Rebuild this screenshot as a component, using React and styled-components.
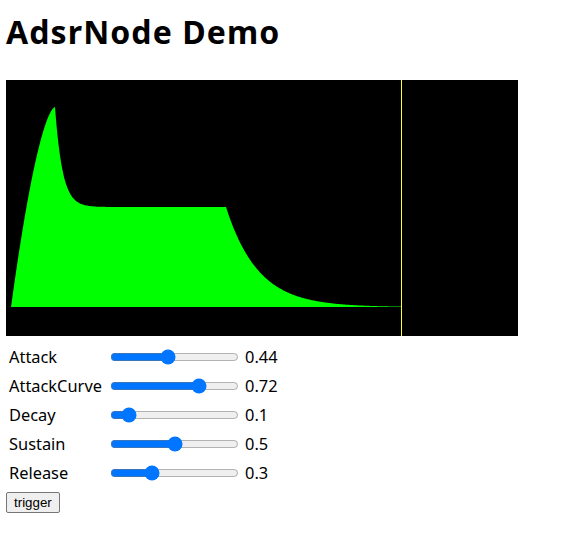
import styled, { createGlobalStyle } from "styled-components";
import { useMemo, useState } from "react";

const GlobalStyle = createGlobalStyle`
  body {
    margin: 0;
    background: #fff;
    color: #000;
    font-family: "Noto Sans", "Noto Sans CJK JP", sans-serif;
  }
`;

const params = [
  { key: "attack", label: "Attack", value: 0.44 },
  { key: "attackCurve", label: "AttackCurve", value: 0.72 },
  { key: "decay", label: "Decay", value: 0.1 },
  { key: "sustain", label: "Sustain", value: 0.5 },
  { key: "release", label: "Release", value: 0.3 },
];

// envelope drawn 100px per second, 200px for level 1.0
const buildPath = () => {
  const base = 227;
  const startX = 5;
  const peakX = 49;
  const gateOff = 220;
  const endX = 395;
  const pts = [];
  for (let x = startX; x <= peakX; x++) {
    const t = (x - startX) / (peakX - startX);
    pts.push([x, 1 - Math.pow(1 - t, 1.6)]);
  }
  for (let x = peakX + 1; x <= gateOff; x++) {
    pts.push([x, 0.5 + 0.5 * Math.exp(-(x - peakX) / 7.5)]);
  }
  const held = pts[pts.length - 1][1];
  for (let x = gateOff + 1; x <= endX; x++) {
    pts.push([x, held * Math.exp(-(x - gateOff) / 32)]);
  }
  let d = `M${startX} ${base}`;
  pts.forEach(([x, l]) => {
    d += ` L${x} ${(base - 200 * l).toFixed(2)}`;
  });
  d += ` L${endX} ${base} Z`;
  return d;
};

export default function App() {
  const [values, setValues] = useState(
    Object.fromEntries(params.map((p) => [p.key, p.value]))
  );
  const path = useMemo(buildPath, []);

  return (
    <Page>
      <GlobalStyle />
      <Title>AdsrNode Demo</Title>
      <Scope width="512" height="256" viewBox="0 0 512 256">
        <rect width="512" height="256" fill="#000" />
        <path d={path} fill="#00ff00" />
        <line x1="395.5" y1="0" x2="395.5" y2="256" stroke="#ffff30" strokeWidth="1" />
      </Scope>
      <Controls>
        {params.map((p) => (
          <Row key={p.key}>
            <Label>{p.label}</Label>
            <Slider
              type="range"
              min="0"
              max="1"
              step="0.01"
              value={values[p.key]}
              onChange={(e) =>
                setValues({ ...values, [p.key]: parseFloat(e.target.value) })
              }
            />
            <Value>{values[p.key]}</Value>
          </Row>
        ))}
      </Controls>
      <Trigger>trigger</Trigger>
    </Page>
  );
}

const Page = styled.div`
  padding: 12px 6px 20px;
`;

const Title = styled.h1`
  margin: 0 0 28px;
  font-size: 32px;
  line-height: 40px;
  font-weight: 700;
  letter-spacing: 1.1px;
`;

const Scope = styled.svg`
  display: block;
`;

const Controls = styled.div`
  display: grid;
  grid-template-columns: 102px 133px auto;
  margin-top: 6px;
`;

const Row = styled.div`
  display: contents;
`;

const Label = styled.div`
  padding-left: 3px;
  font-size: 16.4px;
  line-height: 29px;
  height: 29px;
`;

const Slider = styled.input`
  width: 129px;
  margin: 0 2px;
  align-self: center;
`;

const Value = styled.div`
  padding-left: 4px;
  font-size: 16.4px;
  line-height: 29px;
`;

const Trigger = styled.button`
  margin-top: 5px;
  font-family: "Liberation Sans", Arial, sans-serif;
  font-size: 13.33px;
  padding: 2px 7px;
  border: 1px solid #767676;
  border-radius: 2px;
  background: #efefef;
  color: #000;
`;
